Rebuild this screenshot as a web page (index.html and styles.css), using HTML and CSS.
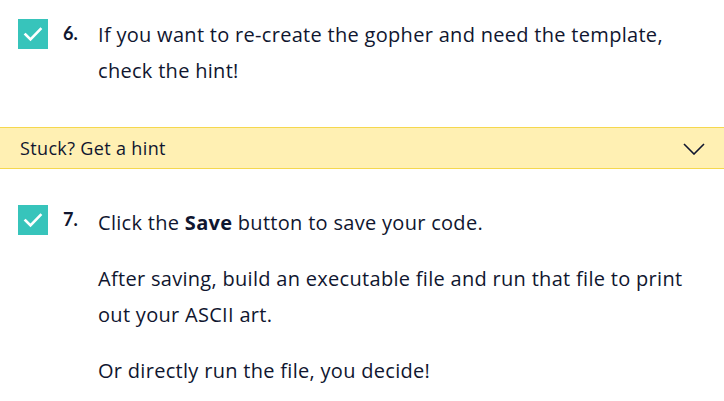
FILE: index.html
```html
<!DOCTYPE html>
<html>
<head>
<meta charset="utf-8">
<link rel="stylesheet" href="styles.css">
</head>
<body>
<div class="page">
  <div class="task task-6">
    <span class="check"><svg width="30" height="30" viewBox="0 0 30 30"><path d="M7.5 15.5 L12.5 20.5 L22.5 10" fill="none" stroke="#fff" stroke-width="2.6" stroke-linecap="square"/></svg></span>
    <span class="num">6.</span>
    <div class="body">
      <p>If you want to re-create the gopher and need the template, check the hint!</p>
    </div>
  </div>
  <div class="hint">
    <span class="hint-label">Stuck? Get a hint</span>
    <svg class="chev" width="22" height="12" viewBox="0 0 22 12"><path d="M1 1 L11 11 L21 1" fill="none" stroke="#10162f" stroke-width="1.6"/></svg>
  </div>
  <div class="task task-7">
    <span class="check"><svg width="30" height="30" viewBox="0 0 30 30"><path d="M7.5 15.5 L12.5 20.5 L22.5 10" fill="none" stroke="#fff" stroke-width="2.6" stroke-linecap="square"/></svg></span>
    <span class="num">7.</span>
    <div class="body">
      <p>Click the <strong>Save</strong> button to save your code.</p>
      <p>After saving, build an executable file and run that file to print out your ASCII art.</p>
      <p>Or directly run the file, you decide!</p>
    </div>
  </div>
</div>
</body>
</html>
```
FILE: styles.css
```css
html, body {
  margin: 0;
  padding: 0;
  background: #fff;
}
body {
  font-family: "Open Sans", Lato, sans-serif;
  color: #10162f;
  width: 724px;
  height: 401px;
  overflow: hidden;
}
.task {
  display: flex;
  align-items: flex-start;
  padding-left: 18px;
  padding-right: 38px;
}
.task-6 {
  padding-top: 17px;
}
.task-7 {
  padding-top: 34px;
}
.check {
  flex: none;
  width: 30px;
  height: 30px;
  background: #37c4bb;
  margin-top: 2px;
  display: block;
}
.check svg { display: block; }
.num {
  flex: none;
  width: 35px;
  margin-left: 15px;
  font-family: Lato, sans-serif;
  font-weight: 700;
  font-size: 18px;
  line-height: 32px;
}
.body {
  flex: 1;
}
.task-7 .body { padding-top: 2px; }
.body p {
  margin: 0 0 20px 0;
  font-size: 20px;
  letter-spacing: 0.3px;
  line-height: 36px;
}
.body strong { font-weight: 700; }
.body p:last-child { margin-bottom: 0; }
.hint {
  margin-top: 38px;
  height: 40px;
  background: #fff0b3;
  border-top: 1px solid #f5d84e;
  border-bottom: 1px solid #f5d84e;
  display: flex;
  align-items: center;
  justify-content: space-between;
  padding: 0 19px 0 20px;
}
.hint-label {
  font-size: 18px;
  letter-spacing: 0.35px;
}
.chev { display: block; margin-top: 1px; }
```
